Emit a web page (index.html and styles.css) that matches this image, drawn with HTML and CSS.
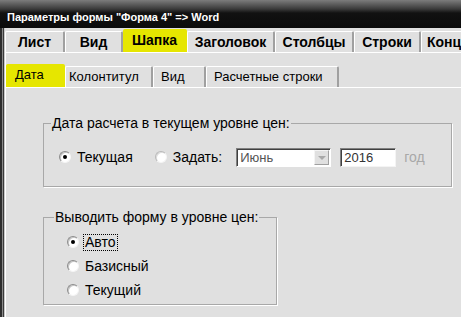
FILE: index.html
```html
<!DOCTYPE html>
<html lang="ru">
<head>
  <meta charset="UTF-8">
  <title>Параметры формы</title>
  <link rel="stylesheet" href="styles.css">
</head>
<body>

<div class="window">
  <div class="titlebar">Параметры формы "Форма 4" =&gt; Word</div>

  <div class="frame">
    <div class="tabs main-tabs">
      <div class="tab">Лист</div>
      <div class="tab">Вид</div>
      <div class="tab active">Шапка</div>
      <div class="tab">Заголовок</div>
      <div class="tab">Столбцы</div>
      <div class="tab">Строки</div>
      <div class="tab">Конц</div>
    </div>

    <div class="tab-page">
      <div class="tabs sub-tabs">
        <div class="tab active">Дата</div>
        <div class="tab">Колонтитул</div>
        <div class="tab">Вид</div>
        <div class="tab">Расчетные строки</div>
      </div>

      <div class="sub-page">
        <fieldset class="group group-date">
          <legend>Дата расчета в текущем уровне цен:</legend>
          <div class="date-row">
            <span class="radio checked"></span>
            <span class="label">Текущая</span>
            <span class="radio set-radio"></span>
            <span class="label">Задать:</span>
            <div class="combo">
              <span class="combo-text">Июнь</span>
              <span class="combo-btn"></span>
            </div>
            <div class="edit">2016</div>
            <span class="unit">год</span>
          </div>
        </fieldset>

        <fieldset class="group group-level">
          <legend>Выводить форму в уровне цен:</legend>
          <div class="option">
            <span class="radio checked"></span>
            <span class="label focus">Авто</span>
          </div>
          <div class="option">
            <span class="radio"></span>
            <span class="label">Базисный</span>
          </div>
          <div class="option">
            <span class="radio"></span>
            <span class="label">Текущий</span>
          </div>
        </fieldset>
      </div>
    </div>
  </div>
</div>

</body>
</html>
```

FILE: styles.css
```css
body {
  margin: 0;
  font-family: 'Liberation Sans', Arial, sans-serif;
  font-size: 13px;
  color: #000;
  background: #e0e0e0;
  overflow: hidden;
}

.window {
  width: 461px;
  height: 317px;
  background: #e0e0e0;
  overflow: hidden;
}

.titlebar {
  height: 28px;
  box-sizing: border-box;
  padding: 12px 0 0 7px;
  background: linear-gradient(to bottom, #7c7c7c 0, #3a3a3a 9px, #111 13px, #0b0b0b 100%);
  color: #fff;
  font-weight: bold;
  font-size: 11px;
  line-height: 11px;
  white-space: nowrap;
}

.frame {
  height: 289px;
  padding-left: 5px;
  box-shadow: inset 2px 0 #2e2e2e, inset 3px 0 #8a8a8a, inset 4px 0 #3a3a3a, inset 5px 0 #c8c8c8;
}

/* tabs */

.tabs {
  display: flex;
  align-items: flex-end;
  white-space: nowrap;
}

.tab {
  box-sizing: border-box;
  border-top: 1px solid #fff;
  border-left: 1px solid #fff;
  border-right: 2px solid #a0a0a0;
  border-radius: 2px 2px 0 0;
  text-align: center;
  flex: none;
}

.tab.active {
  background: #e6e600;
  border-color: #e6e600;
}

.main-tabs {
  height: 24px;
}

.main-tabs .tab {
  height: 21px;
  line-height: 20px;
  font-weight: bold;
  font-size: 14px;
}

.main-tabs .tab.active {
  height: 23px;
}

.main-tabs .tab:nth-child(1) { width: 60px; }
.main-tabs .tab:nth-child(2) { width: 58px; }
.main-tabs .tab:nth-child(3) { width: 64px; }
.main-tabs .tab:nth-child(4) { width: 88px; }
.main-tabs .tab:nth-child(5) { width: 79px; }
.main-tabs .tab:nth-child(6) { width: 67px; }
.main-tabs .tab:nth-child(7) { width: 60px; text-align: left; padding-left: 5px; }

.tab-page {
  border-top: 1px solid #fff;
  border-left: 1px solid #fff;
  height: 264px;
}

.sub-tabs {
  height: 34px;
}

.sub-tabs .tab {
  height: 21px;
  line-height: 20px;
  text-align: left;
  padding-left: 7px;
}

.sub-tabs .tab.active {
  height: 23px;
  padding-left: 8px;
}

.sub-tabs .tab:nth-child(1) { width: 59px; }
.sub-tabs .tab:nth-child(2) { width: 88px; padding-left: 3px; }
.sub-tabs .tab:nth-child(3) { width: 53px; }
.sub-tabs .tab:nth-child(4) { width: 133px; }

.sub-page {
  border-top: 1px solid #fff;
  padding: 27px 0 0 37px;
  font-size: 14px;
}

/* group boxes */

.group {
  margin: 0;
  padding: 0;
  border: 1px solid #a8a8a8;
  box-shadow: 1px 1px 0 #fff;
  min-width: 0;
  box-sizing: border-box;
}

.group legend {
  margin-left: 7px;
  padding: 0 1px;
  line-height: 16px;
}

.group-date {
  width: 409px;
  padding: 16px 0 19px 0;
}

.group-level {
  width: 234px;
  margin-top: 22px;
  padding: 5px 0 2px 0;
}

.group-level legend {
  margin-left: 10px;
}

/* radios */

.radio {
  display: inline-block;
  box-sizing: border-box;
  width: 12px;
  height: 12px;
  border-radius: 50%;
  background: #fff;
  border: 1px solid;
  border-color: #8c8c8c #f4f4f4 #f4f4f4 #8c8c8c;
  box-shadow: inset 1px 1px 0 #c4c4c4;
  position: relative;
  flex: none;
}

.radio.checked::after {
  content: "";
  position: absolute;
  left: 3px;
  top: 3px;
  width: 4px;
  height: 4px;
  border-radius: 50%;
  background: #000;
}

.radio.set-radio {
  margin-left: 22px;
  border-color: #b8b8b8 #f4f4f4 #f4f4f4 #b8b8b8;
  box-shadow: inset 1px 1px 0 #dcdcdc;
}

.label {
  margin-left: 6px;
}

.date-row {
  display: flex;
  align-items: center;
  height: 20px;
  padding-left: 15px;
}

.option {
  display: flex;
  align-items: center;
  height: 24px;
  padding-left: 23px;
}

.option .label {
  border: 1px solid transparent;
  padding: 0 1px;
  line-height: 15px;
  margin-left: 4px;
}

.option .label.focus {
  border: 1px dotted #000;
}

/* combo and edit */

.combo {
  display: flex;
  align-items: center;
  box-sizing: border-box;
  width: 95px;
  height: 19px;
  margin-left: 14px;
  background: #fff;
  border: 1px solid;
  border-color: #808080 #fff #fff #808080;
  box-shadow: inset 1px 1px 0 #404040;
  font-size: 13px;
}

.combo-text {
  flex: 1;
  padding-left: 3px;
  color: #555;
}

.combo-btn {
  width: 15px;
  height: 15px;
  margin-right: 1px;
  box-sizing: border-box;
  background: #e0e0e0;
  border: 1px solid;
  border-color: #f4f4f4 #a0a0a0 #a0a0a0 #f4f4f4;
  position: relative;
}

.combo-btn::after {
  content: "";
  position: absolute;
  left: 3px;
  top: 5px;
  border-left: 4px solid transparent;
  border-right: 4px solid transparent;
  border-top: 4px solid #a8a8a8;
}

.edit {
  box-sizing: border-box;
  width: 56px;
  height: 19px;
  margin-left: 9px;
  padding: 1px 0 0 3px;
  line-height: 15px;
  font-size: 13px;
  background: #fff;
  color: #333;
  border: 1px solid;
  border-color: #808080 #f4f4f4 #f4f4f4 #808080;
  box-shadow: inset 1px 1px 0 #404040;
}

.unit {
  margin-left: 8px;
  color: #a8a8a8;
}
```
